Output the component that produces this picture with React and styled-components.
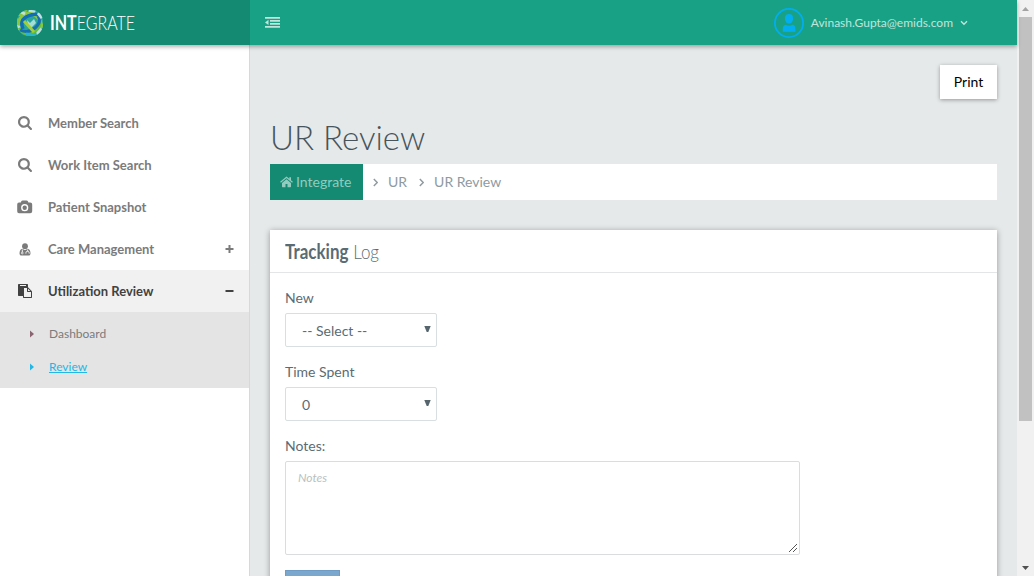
import React from "react";
import styled, { createGlobalStyle } from "styled-components";

const Global = createGlobalStyle`
  *, *::before, *::after { box-sizing: border-box; }
  html, body { margin: 0; overflow: hidden; }
  body { font: 14px/20px Lato, "Liberation Sans", sans-serif; color: #5b6b73; background: #e5eaea; }
  a { color: inherit; text-decoration: none; }
`;

const Window = styled.div`
  display: flex;
  height: 576px;
  overflow: hidden;
`;
const Page = styled.div`
  display: flex;
  flex-direction: column;
  flex: 1;
  min-width: 0;
`;
const Header = styled.header`
  display: flex;
  flex: none;
  height: 45px;
  background: #19a186;
  box-shadow: 0 2px 4px rgba(0, 0, 0, 0.3);
  z-index: 2;
`;
const Brand = styled.div`
  display: flex;
  align-items: center;
  width: 250px;
  padding-left: 16px;
  background: #148a72;
  color: #fff;
`;
const BrandName = styled.span`
  display: inline-block;
  margin-left: 6px;
  font-size: 20px;
  font-weight: 300;
  line-height: 45px;
  white-space: nowrap;
  transform: scaleX(${(p) => p.$squeeze});
  transform-origin: left;
  b { font-weight: 700; }
`;
const TopBar = styled.div`
  display: flex;
  flex: 1;
  align-items: center;
  justify-content: space-between;
  padding: 0 49px 0 15px;
  color: #bfe5dc;
`;
const User = styled.a`
  display: flex;
  align-items: center;
  font-size: 12px;
`;
const UserName = styled.span`
  margin: 0 7px 0 7px;
  letter-spacing: ${(p) => p.$track || "0"};
`;
const Body = styled.div`
  display: flex;
  flex: 1;
  min-height: 0;
`;
const Sidebar = styled.nav`
  width: 250px;
  flex: none;
  padding-top: 57px;
  background: #fff;
  border-right: 1px solid #d6d9d9;
`;
const NavItem = styled.a`
  display: flex;
  align-items: center;
  height: 42px;
  padding: 0 15px 0 16px;
  font-size: 13px;
  font-weight: ${(p) => (p.$active ? 700 : 700)};
  color: ${(p) => (p.$active ? "#414141" : "#7b7b7b")};
  background: ${(p) => (p.$active ? "#f1f1f1" : "transparent")};
`;
const NavIcon = styled.span`
  display: flex;
  justify-content: center;
  width: 18px;
  margin-right: 14px;
`;
const NavText = styled.span`
  flex: 1;
  letter-spacing: ${(p) => p.$track || "0"};
`;
const SubMenu = styled.div`
  height: 76px;
  padding-top: 5px;
  background: #e4e4e4;
`;
const SubItem = styled.a`
  display: flex;
  align-items: center;
  height: 33px;
  padding-left: 29px;
  gap: 14px;
  font-size: 12px;
  color: ${(p) => (p.$active ? "#23b7e5" : "#7b7b7b")};
  span { text-decoration: ${(p) => (p.$active ? "underline" : "none")}; }
`;
const Main = styled.main`
  flex: 1;
  min-width: 0;
  padding: 20px 20px 0;
  background: #e5e9ea;
`;
const Toolbar = styled.div`
  display: flex;
  justify-content: flex-end;
`;
const PrintButton = styled.button`
  width: 57px;
  height: 34px;
  padding: 0;
  border: 0;
  background: #fff;
  color: #000;
  font: 14px/20px Lato, sans-serif;
  box-shadow: 0 1px 4px rgba(0, 0, 0, 0.35);
`;
const Title = styled.h1`
  margin: 18px 0 7px;
  font-size: 33px;
  line-height: 40px;
  font-weight: 300;
  color: #47545b;
`;
const Crumbs = styled.div`
  display: flex;
  align-items: center;
  height: 36px;
  background: #fff;
  color: #8f9a9f;
`;
const Home = styled.a`
  display: flex;
  align-items: center;
  gap: 3px;
  width: 93px;
  height: 36px;
  padding-left: 10px;
  margin-right: 10px;
  background: #148a72;
  color: #93cbbf;
`;
const Crumb = styled.a`
  margin: 0 12px 0 10px;
`;
const Card = styled.section`
  margin-top: 30px;
  height: 460px;
  background: #fff;
  box-shadow: 0 1px 6px rgba(0, 0, 0, 0.35);
`;
const CardHead = styled.h2`
  height: 43px;
  margin: 0;
  padding-left: 15px;
  border-bottom: 1px solid #e3e5e6;
  font-size: 20px;
  line-height: 43px;
  font-weight: 300;
  color: #5b6b73;
  b { font-weight: 700; }
`;
const CardTitle = styled.span`
  display: inline-block;
  transform: scaleX(${(p) => p.$squeeze});
  transform-origin: left;
`;
const Form = styled.div`
  padding: 15px 15px 0;
`;
const Field = styled.div`
  margin-bottom: 15px;
`;
const Label = styled.label`
  display: block;
  margin-bottom: 5px;
`;
const Select = styled.div`
  display: flex;
  align-items: center;
  justify-content: space-between;
  width: 152px;
  height: 34px;
  padding: 2px 5px 0 16px;
  border: 1px solid #d9dfe0;
  border-radius: 2px;
  background: #fff;
  svg { margin-top: -5px; }
`;
const NotesBox = styled.div`
  display: flex;
  justify-content: space-between;
  width: 515px;
  height: 94px;
  padding: 6px 1px 1px 12px;
  border: 1px solid #dadddd;
  border-radius: 2px;
  font-size: 12px;
  font-style: italic;
  color: #b9bfc2;
  svg { align-self: flex-end; }
`;
const Submit = styled.div`
  width: 55px;
  height: 34px;
  background: #7ba7cf;
  border: 1px solid #6e9cc5;
`;
const Scrollbar = styled.div`
  display: flex;
  flex-direction: column;
  align-items: center;
  width: 17px;
  flex: none;
  background: #f1f1f1;
`;
const ScrollArrow = styled.div`
  display: flex;
  align-items: center;
  justify-content: center;
  height: 17px;
`;
const Thumb = styled.div`
  width: 13px;
  height: 404px;
  margin-bottom: auto;
  background: #c1c1c1;
`;

const Search = () => (
  <svg width="14" height="14" viewBox="0 0 1664 1664" fill="currentColor">
    <path d="M1152 704q0-185-131.500-316.500t-316.500-131.500-316.500 131.500-131.500 316.500 131.500 316.500 316.500 131.500 316.500-131.500 131.500-316.500zm512 832q0 52-38 90t-90 38q-54 0-90-38l-343-342q-179 124-399 124-143 0-273.500-55.500t-225-150-150-225-55.500-273.500 55.500-273.500 150-225 225-150 273.500-55.500 273.500 55.500 225 150 150 225 55.500 273.500q0 220-124 399l343 343q37 37 37 90z" />
  </svg>
);
const Camera = () => (
  <svg width="16" height="14" viewBox="0 0 16 14" fill="currentColor">
    <path fillRule="evenodd" d="M2 2.500H3.800L4.300 1.200Q4.700.4 5.600.4H9.600Q10.500.4 10.900 1.200L11.400 2.500H13.200Q15.200 2.500 15.200 4.400V11.300Q15.200 13.200 13.200 13.200H2Q.2 13.200.2 11.300V4.400Q.2 2.500 2 2.500ZM7.700 4.100A3.600 3.600 0 1 0 7.700 11.300A3.600 3.600 0 1 0 7.700 4.100ZM7.700 5.500A2.200 2.200 0 1 1 7.700 9.900A2.200 2.200 0 1 1 7.700 5.500Z" />
  </svg>
);
const Doctor = () => (
  <svg width="12" height="13" viewBox="0 0 12 13" fill="currentColor">
    <circle cx="6" cy="3.200" r="2.900" />
    <path d="M3.300 5.800Q6 8 8.700 5.800Q11.500 6.400 11.500 10.600Q11.500 12.500 9.700 12.500H2.300Q.5 12.500.5 10.600Q.5 6.400 3.300 5.800Z" />
    <path d="M3.300 6.500V9.200M8.700 6.500V8.200M6.900 10.600V9.800Q6.900 8.300 8.500 8.300T10.200 9.800V10.600" fill="none" stroke="#fff" strokeWidth=".9" />
    <circle cx="3.300" cy="10" r=".9" fill="none" stroke="#fff" strokeWidth=".7" />
  </svg>
);
const Paste = () => (
  <svg width="14" height="14" viewBox="0 0 1792 1792" fill="currentColor">
    <path d="M768 1664h896v-640h-416q-40 0-68-28t-28-68v-416h-384v1152zm256-1440v-64q0-13-9.500-22.500t-22.500-9.500h-704q-13 0-22.500 9.500t-9.500 22.500v64q0 13 9.500 22.500t22.500 9.500h704q13 0 22.500-9.500t9.500-22.500zm256 672h299l-299-299v299zm512 128v672q0 40-28 68t-68 28h-960q-40 0-68-28t-28-68v-160h-544q-40 0-68-28t-28-68v-1344q0-40 28-68t68-28h1088q40 0 68 28t28 68v328q21 13 36 28l408 408q28 28 48 76t20 88z" />
  </svg>
);
const HomeIcon = () => (
  <svg width="13" height="12" viewBox="0 0 13 12" fill="currentColor">
    <path d="M6.500 3.200L11 6.900V10.600Q11 11.200 10.400 11.200H7.500V8.100H5.500V11.200H2.600Q2 11.200 2 10.600V6.900Z" />
    <path d="M.5 6.300L6.500 1.300L12.500 6.300" fill="none" stroke="currentColor" strokeWidth="1.200" />
    <path d="M9.300 1.200H11V5L9.300 3.500Z" />
  </svg>
);
const Chevron = ({ down }) => (
  <svg width={down ? 8 : 5} height={down ? 6 : 9} viewBox={down ? "0 0 8 6" : "0 0 5 9"} fill="none" stroke="currentColor" strokeWidth="1.400">
    <path d={down ? "M1 1.200L4 4.200L7 1.200" : "M.8 1L4.200 4.500L.8 8"} />
  </svg>
);
const Outdent = () => (
  <svg width="15" height="11" viewBox="0 0 15 11" fill="currentColor">
    <path d="M0 0H15V1.800H0ZM5 3H15V4.800H5ZM5 6H15V7.800H5ZM0 9H15V10.800H0ZM0 5.500L3.500 2.800V8Z" />
  </svg>
);
const Avatar = () => (
  <svg width="30" height="30" viewBox="0 0 30 30">
    <circle cx="15" cy="15" r="14.100" fill="none" stroke="#02aeef" strokeWidth="1.800" />
    <path d="M11 9.500Q11 6 15 6T19 9.500V11.200Q18.500 15.400 15 15.400T11 11.200Z" fill="#02aeef" />
    <path d="M8.800 23.700V20.500Q8.800 17.400 11.600 16.700Q15 19 18.400 16.700Q21.400 17.400 21.400 20.500V23.700Z" fill="#02aeef" />
  </svg>
);
const Globe = () => (
  <svg width="28" height="28" viewBox="0 0 28 28">
    <defs><clipPath id="ball"><rect x="1" y="1" width="26" height="26" rx="11.500" /></clipPath></defs>
    <g clipPath="url(#ball)">
      <rect width="28" height="28" fill="#2aa79b" />
      <path d="M5 0H12L8 7H2ZM0 9L5 10V17L0 16Z" fill="#8cc63f" />
      <path d="M13 0H20L19 4L12 5ZM1 16L5 17L6 22L2 21ZM20 22L25 18L27 23L21 27Z" fill="#b7e0df" />
      <path d="M11 11L14 14L18 10L20 14L15 19L12 17Z" fill="#a8dcd6" />
      <path d="M3 12Q7 2 16 5Q25 8 26 19" fill="none" stroke="#8bc83e" strokeWidth="3" />
      <path d="M3 19Q8 27 16 24T24 12" fill="none" stroke="#65c132" strokeWidth="3" />
      <path d="M7 20Q3 11 12 7T26 8" fill="none" stroke="#126fb3" strokeWidth="3.500" />
      <path d="M4 21Q12 25 19 19T22 7" fill="none" stroke="#176fb2" strokeWidth="3" />
      <path d="M8 12L18 23" stroke="#a3ce3b" strokeWidth="3" />
      <path d="M10 25L20 26" stroke="#28b6c9" strokeWidth="3" />
      <path d="M5 3L9 5M22 4L26 9" stroke="#c4e0da" strokeWidth="3" />
    </g>
  </svg>
);
const Toggle = ({ open }) => (
  <svg width="9" height="8" viewBox="0 0 9 8" fill="currentColor">
    <path d="M.5 3H8.500V5H.5Z" />
    {!open && <path d="M3.500 0H5.500V8H3.500Z" />}
  </svg>
);
const Caret = ({ color = "currentColor" }) => (
  <svg width="6" height="8" viewBox="0 0 6 8"><path d="M1 .5L5 4L1 7.500Z" fill={color} /></svg>
);
const SelectArrow = () => (
  <svg width="7" height="6" viewBox="0 0 7 6"><path d="M.3 0H6.700L4.300 6H2.700Z" fill="#56656d" /></svg>
);
const Grip = () => (
  <svg width="10" height="10" viewBox="0 0 10 10" stroke="#555" fill="none"><path d="M1 9L9 1M5 9L9 5" /></svg>
);

const items = [
  { icon: Search, text: "Member Search" },
  { icon: Search, text: "Work Item Search" },
  { icon: Camera, text: "Patient Snapshot" },
  { icon: Doctor, text: "Care Management", toggle: true },
  { icon: Paste, text: "Utilization Review", toggle: true, active: true },
];

export default function App() {
  return (
    <>
      <Global />
      <Window>
        <Page>
          <Header>
            <Brand>
              <Globe />
              <BrandName $squeeze={0.8}><b>INT</b>EGRATE</BrandName>
            </Brand>
            <TopBar>
              <Outdent />
              <User>
                <Avatar />
                <UserName>Avinash.Gupta@emids.com</UserName>
                <Chevron down />
              </User>
            </TopBar>
          </Header>
          <Body>
            <Sidebar>
              {items.map(({ icon: Icon, text, toggle, active }) => (
                <NavItem key={text} $active={active}>
                  <NavIcon><Icon /></NavIcon>
                  <NavText>{text}</NavText>
                  {toggle && <Toggle open={active} />}
                </NavItem>
              ))}
              <SubMenu>
                <SubItem><Caret color="#8a6470" /><span>Dashboard</span></SubItem>
                <SubItem $active><Caret /><span>Review</span></SubItem>
              </SubMenu>
            </Sidebar>
            <Main>
              <Toolbar><PrintButton>Print</PrintButton></Toolbar>
              <Title>UR Review</Title>
              <Crumbs>
                <Home><HomeIcon />Integrate</Home>
                <Chevron /><Crumb>UR</Crumb>
                <Chevron /><Crumb>UR Review</Crumb>
              </Crumbs>
              <Card>
                <CardHead><CardTitle $squeeze={0.85}><b>Tracking</b> Log</CardTitle></CardHead>
                <Form>
                  <Field><Label>New</Label><Select>-- Select --<SelectArrow /></Select></Field>
                  <Field><Label>Time Spent</Label><Select>0<SelectArrow /></Select></Field>
                  <Field><Label>Notes:</Label><NotesBox>Notes<Grip /></NotesBox></Field>
                  <Submit />
                </Form>
              </Card>
            </Main>
          </Body>
        </Page>
        <Scrollbar>
          <ScrollArrow><svg width="7" height="4" viewBox="0 0 7 4"><path d="M3.500 0L7 4H0Z" fill="#a3a3a3" /></svg></ScrollArrow>
          <Thumb />
          <ScrollArrow><svg width="7" height="4" viewBox="0 0 7 4"><path d="M0 0H7L3.500 4Z" fill="#505050" /></svg></ScrollArrow>
        </Scrollbar>
      </Window>
    </>
  );
}
